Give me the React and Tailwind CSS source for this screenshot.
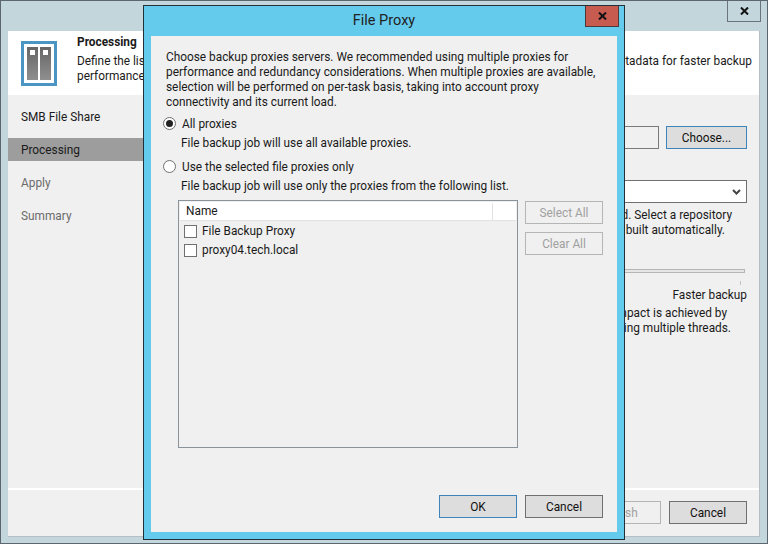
function WizardButton({ width = 'w-[78px]', children, disabled, focused }) {
  const border = disabled ? 'border-[#b5b5b5] text-[#a0a0a0] bg-[#f0f0f0]' : focused ? 'border-[#3f84b8] bg-[#dddddd] text-[#111]' : 'border-[#707070] bg-[#dddddd] text-[#111]';
  return (
    <div className={`flex h-[23px] items-center justify-center border pt-px ${width} ${border}`}>
      {children}
    </div>
  );
}

function Radio({ checked }) {
  return (
    <div className="flex h-[13px] w-[13px] items-center justify-center rounded-full border border-[#707070] bg-white">
      {checked && <div className="h-[7px] w-[7px] rounded-full bg-[#222]"></div>}
    </div>
  );
}

function ProxyRow({ name }) {
  return (
    <div className="flex h-[19px] items-center pl-[4px]">
      <div className="h-[13px] w-[13px] border border-[#707070] bg-white"></div>
      <span className="ml-[5px]">{name}</span>
    </div>
  );
}

function CloseGlyph() {
  return (
    <svg width="9" height="8" viewBox="0 0 9 8">
      <path d="M1 0.5 L8 7.5 M8 0.5 L1 7.5" stroke="#111" strokeWidth="2" fill="none" />
    </svg>
  );
}

function FileProxyDialog() {
  return (
    <div className="absolute left-[142px] top-[4px] flex h-[535px] w-[482px] flex-col border border-[#22303a] bg-[#65cbed] px-[7px] pb-[7px]">
      <div className="relative flex h-[30px] shrink-0 items-center justify-center pb-px text-[14.5px] text-[#222]">
        File Proxy
        <div className="absolute right-[-2px] top-0 flex h-[21px] w-[34px] items-center justify-center border border-t-0 border-[#4a3a38] bg-[#c75b50]">
          <CloseGlyph />
        </div>
      </div>
      <div className="flex min-h-0 flex-1 flex-col bg-[#f0f0f0] pl-[15px] pt-[14px]">
        <p className="whitespace-nowrap">
          Choose backup proxies servers. We recommended using multiple proxies for<br />
          performance and redundancy considerations. When multiple proxies are available,<br />
          selection will be performed on per-task basis, taking into account proxy<br />
          connectivity and its current load.
        </p>
        <div className="mt-[4px] flex h-[19px] items-center">
          <div className="-ml-[3px]"><Radio checked /></div>
          <span className="ml-[6px] pt-[2px]">All proxies</span>
        </div>
        <p className="ml-[15px] mt-[3px]">File backup job will use all available proxies.</p>
        <div className="mt-[6px] flex h-[19px] items-center">
          <div className="-ml-[3px]"><Radio /></div>
          <span className="ml-[6px] pt-[2px]">Use the selected file proxies only</span>
        </div>
        <p className="ml-[15px] mt-[3px]">File backup job will use only the proxies from the following list.</p>
        <div className="mt-[6px] flex items-start">
          <div className="ml-[12px] h-[248px] w-[340px] border border-[#8a929a] p-px">
            <div className="flex h-[19px] items-center border-b border-[#e2e2e2] bg-white pl-[6px] pt-px">
              <span className="w-[306px]">Name</span>
              <div className="h-full w-px bg-[#e2e2e2]"></div>
            </div>
            <div className="mt-px">
              <ProxyRow name="File Backup Proxy" />
              <ProxyRow name="proxy04.tech.local" />
            </div>
          </div>
          <div className="ml-[7px] flex flex-col gap-[8px] pt-px">
            <WizardButton disabled>Select All</WizardButton>
            <WizardButton disabled>Clear All</WizardButton>
          </div>
        </div>
        <div className="mt-[47px] flex justify-end gap-[8px] pr-[14px]">
          <WizardButton focused>OK</WizardButton>
          <WizardButton>Cancel</WizardButton>
        </div>
      </div>
    </div>
  );
}

export default function App() {
  return (
    <div className="relative h-[544px] w-[768px] overflow-hidden border border-[#5c666e] bg-[#c3d6dc] text-[11.85px] leading-[15px] text-[#1a1a1a]" style={{ fontFamily: 'Roboto, sans-serif' }}>
      <div className="absolute right-[6px] top-[-1px] flex h-[22px] w-[34px] items-center justify-center border border-[#6b747b]">
        <CloseGlyph />
      </div>

      <div className="mx-[7px] mt-[30px] flex h-[506px] flex-col border-b border-r border-[#b4bec6] bg-[#f0f0f0]">
        <div className="flex h-[64px] shrink-0 bg-white">
          <svg className="ml-[13px] mt-[10px]" width="36" height="45" viewBox="0 0 36 45">
            <defs>
              <linearGradient id="bar" x1="0" y1="0" x2="0" y2="1">
                <stop offset="0" stopColor="#666" />
                <stop offset="1" stopColor="#8f8f8f" />
              </linearGradient>
            </defs>
            <rect x="1.5" y="1.5" width="33" height="42" fill="#fff" stroke="#4a95c4" strokeWidth="3" />
            <rect x="6" y="6" width="11" height="33" fill="url(#bar)" />
            <rect x="19" y="6" width="11" height="33" fill="url(#bar)" />
            <rect x="9" y="9" width="5" height="5" fill="#fff" />
            <rect x="22" y="9" width="5" height="5" fill="#fff" />
          </svg>
          <div className="ml-[20px] flex-1">
            <div className="mt-[4px] font-bold">Processing</div>
            <div className="mt-[4px] flex justify-between pr-[7px]">
              <span>Define the list</span>
              <span>metadata for faster backup</span>
            </div>
            <div>performance</div>
          </div>
        </div>

        <div className="flex min-h-0 flex-1">
          <div className="w-[135px] shrink-0 pt-[14px]">
            <div className="flex h-[15px] items-center pl-[13px] pt-[2px]">SMB File Share</div>
            <div className="mt-[14px] flex h-[23px] items-center bg-[#9d9d9d] pl-[13px] pt-[2px]">Processing</div>
            <div className="mt-[14px] flex h-[15px] items-center pl-[13px] pt-[2px] text-[#6b6b6b]">Apply</div>
            <div className="mt-[18px] flex h-[15px] items-center pl-[13px] pt-[2px] text-[#6b6b6b]">Summary</div>
          </div>

          <div className="flex flex-1 flex-col items-end pr-[12px] pt-[31px]">
            <div className="flex w-full justify-end gap-[7px]">
              <div className="h-[23px] w-[300px] border border-[#7a7a7a] bg-[#f0f0f0]"></div>
              <WizardButton focused width="w-[81px]">Choose...</WizardButton>
            </div>
            <div className="mt-[31px] flex h-[23px] w-[400px] items-center justify-end border border-[#707070] bg-white pr-[5px]">
              <svg width="9" height="6" viewBox="0 0 9 6">
                <path d="M1 1 L4.5 4.5 L8 1" stroke="#444" strokeWidth="2" fill="none" />
              </svg>
            </div>
            <div className="mt-[5px] pr-[15px] text-right">d. Select a repository</div>
            <div className="pr-[22px] text-right">built automatically.</div>
            <div className="mr-[2px] mt-[31px] h-[4px] w-[400px] border border-[#b5b5b5] bg-[#e6e6e6]"></div>
            <div className="mr-[6px] mt-[8px] h-[4px] w-px bg-[#c4c4c4]"></div>
            <div className="mt-[3px]">Faster backup</div>
            <div className="mt-[3px] pr-[20px]">mpact is achieved by</div>
            <div className="pr-[16px]">ing multiple threads.</div>
          </div>
        </div>

        <div className="flex h-[48px] shrink-0 justify-end gap-[8px] border-t-2 border-white pr-[12px] pt-[11px]">
          <WizardButton disabled>Finish</WizardButton>
          <WizardButton>Cancel</WizardButton>
        </div>
      </div>

      <FileProxyDialog />
    </div>
  );
}
